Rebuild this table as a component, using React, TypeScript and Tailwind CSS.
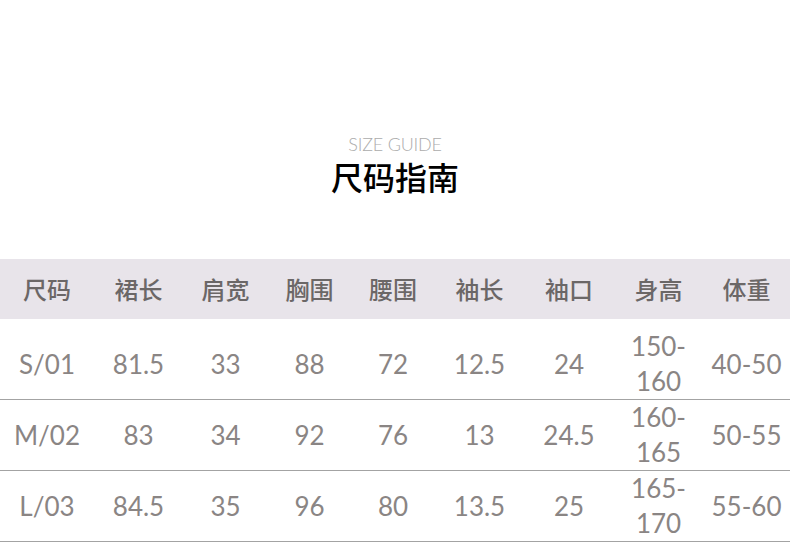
import React from 'react';

const cols = ['w-[94px]', 'w-[89px]', 'w-[85px]', 'w-[83px]', 'w-[84px]', 'w-[89px]', 'w-[90px]', 'w-[89px]', 'w-[87px]'];

const headers = ['尺码', '裙长', '肩宽', '胸围', '腰围', '袖长', '袖口', '身高', '体重'];

const rows: string[][][] = [
  [['S/01'], ['81.5'], ['33'], ['88'], ['72'], ['12.5'], ['24'], ['150-', '160'], ['40-50']],
  [['M/02'], ['83'], ['34'], ['92'], ['76'], ['13'], ['24.5'], ['160-', '165'], ['50-55']],
  [['L/03'], ['84.5'], ['35'], ['96'], ['80'], ['13.5'], ['25'], ['165-', '170'], ['55-60']],
];

export default function App() {
  return (
    <div className="w-[790px] h-[542px] bg-white overflow-hidden font-['Lato','Noto_Sans_CJK_SC',sans-serif]">
      <div className="pt-[133px] flex flex-col items-center">
        <div className="text-[18px] leading-[22px] text-[#acacac] tracking-[-0.2px] font-light">SIZE GUIDE</div>
        <div className="mt-[1px] text-[32px] leading-[40px] text-black font-['Noto_Sans_CJK_SC',sans-serif] font-medium">
          尺码指南
        </div>
      </div>

      <div className="mt-[63px]">
        <div className="flex h-[60px] items-center bg-[#e8e4ea]">
          {headers.map((h, i) => (
            <div
              key={h}
              className={`${cols[i]} text-center text-[24px] text-[#6b6767] font-['Noto_Sans_CJK_SC',sans-serif] font-medium`}
            >
              {h}
            </div>
          ))}
        </div>

        <div className="mt-[10px]">
          {rows.map((row, r) => (
            <div key={r} className="flex h-[71px] items-center border-b border-[#a3a3a3]">
              {row.map((cell, i) => (
                <div
                  key={i}
                  className={`${cols[i]} text-center text-[26px] leading-[35px] text-[#8a8584]`}
                >
                  {cell.map((line) => (
                    <div key={line}>{line}</div>
                  ))}
                </div>
              ))}
            </div>
          ))}
        </div>
      </div>
    </div>
  );
}
